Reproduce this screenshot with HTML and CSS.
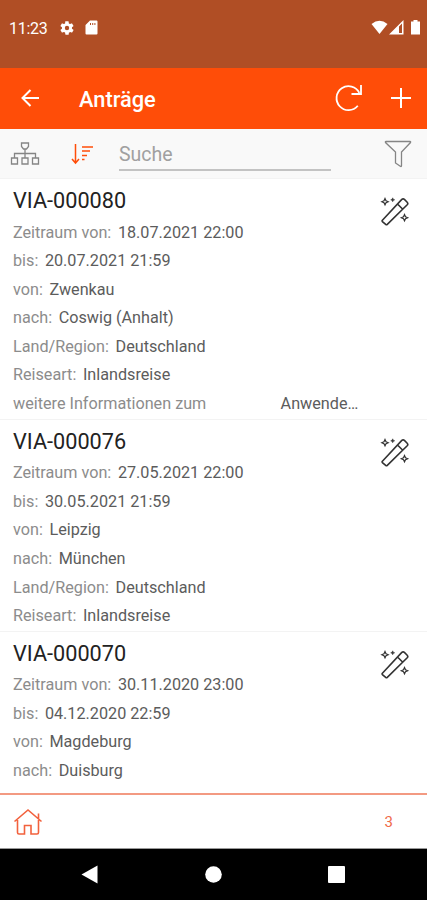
FILE: index.html
```html
<!DOCTYPE html>
<html lang="de">
<head>
  <meta charset="UTF-8" />
  <meta name="viewport" content="width=device-width, initial-scale=1.0"/>
  <title>Anträge</title>
  <link rel="stylesheet" href="styles.css">
</head>
<body>
  <svg class="sprite">
    <symbol id="wand" viewBox="0 0 30 30">
      <path d="M2.400 24.200 21.800 3.400q1.300-1.200 2.600 0l2.800 2.800q1.200 1.300 0 2.600L7.300 28.400q-.8.700-1.600 0L2.400 25.600q-.6-.7 0-1.400zM17.500 8l5.300 5.300" />
      <path d="m5 2.500 1 2.200 2.200 1-2.200 1-1 2.200-1-2.200-2.200-1 2.200-1zM24.500 18.500l1 2.200 2.200 1-2.200 1-1 2.200-1-2.200-2.200-1 2.200-1z" stroke-width="1.200" />
      <path d="m12.700 1.800.6 1.400 1.400.6-1.400.6-.6 1.400-.6-1.400-1.400-.6 1.400-.6z" fill="currentColor" stroke-width=".5" />
    </symbol>
  </svg>

  <div class="status-bar">
    <span class="clock">11:23</span>
    <svg class="gear" width="16" height="16" viewBox="0 0 24 24"><path fill-rule="evenodd" d="M19.400 13c0-.3.1-.6.1-1s0-.7-.1-1l2.100-1.600c.2-.2.3-.4.1-.7l-2-3.400c-.1-.2-.4-.3-.6-.2l-2.500 1c-.5-.4-1.100-.7-1.700-1l-.4-2.600c0-.3-.2-.5-.5-.5h-4c-.3 0-.5.2-.5.4L9.100 5.100c-.6.2-1.200.6-1.700 1L4.900 5.100c-.2-.1-.5 0-.6.2l-2 3.400c-.1.2-.1.5.1.7L4.500 11c0 .3-.1.7-.1 1s0 .7.1 1l-2.100 1.600c-.2.2-.2.4-.1.7l2 3.400c.1.2.4.3.6.2l2.500-1c.5.4 1.100.7 1.700 1l.4 2.600c0 .3.2.5.5.5h4c.3 0 .5-.2.5-.4l.4-2.700c.6-.2 1.200-.6 1.700-1l2.500 1c.2.1.5 0 .6-.2l2-3.400c.1-.2.1-.5-.1-.7zM12 15.300a3.300 3.300 0 1 1 0-6.600 3.300 3.300 0 0 1 0 6.600z"/></svg>
    <svg width="13" height="15" viewBox="0 0 13 15"><path fill-rule="evenodd" d="M5 .5h6.500q1 0 1 1v12q0 1-1 1h-10q-1 0-1-1V5zM5 3v2h1V3zm2.200 0v2h1V3zm2.200 0v2h1V3z"/></svg>
    <div class="signals">
      <svg width="17" height="15" viewBox="0 0 17 15"><path d="M.5 4Q8.500-2.500 16.500 4L8.500 14z"/></svg>
      <svg width="15" height="15" viewBox="0 0 15 15"><path fill-rule="evenodd" d="M14.500 0v14.500H0zM10 6.500v6.500h3V3.500z"/></svg>
      <svg class="battery" width="9" height="15" viewBox="0 0 9 15"><path d="M2.500 0h4v1.500H9V14.500H0V1.500h2.500z"/></svg>
    </div>
  </div>

  <header class="app-bar">
    <svg class="back" width="20" height="20" viewBox="0 0 20 20"><path d="M19 10H2.500M10.500 2l-8 8 8 8"/></svg>
    <h1>Anträge</h1>
    <svg class="refresh" width="28" height="28" viewBox="0 0 28 28"><path d="M22.800 21.800A12 12 0 1 1 24.300 8.800M26 1v9h-9.500"/></svg>
    <svg class="plus" width="22" height="22" viewBox="0 0 22 22"><path d="M11 1v20M1 11h20"/></svg>
  </header>

  <div class="toolbar">
    <svg class="tree" width="30" height="24" viewBox="0 0 30 24"><path d="M11.500 1h7v3.500l-2 2.500h-3l-2-2.500zM15 7v9M4.500 16v-4.500h21V16M1.500 16h6v6h-6zM12 16h6v6h-6zM22.500 16h6v6h-6z"/></svg>
    <svg class="sort" width="24" height="22" viewBox="0 0 24 22"><path d="M4.500 1v19M1 16l3.500 4L8 16M11 4h11M11 8h8M11 12.500h5M11 16.500h2.500"/></svg>
    <input class="search" type="text" placeholder="Suche">
    <svg class="filter" width="28" height="28" viewBox="0 0 28 28"><path d="M2 1.500h24q1 0 .5 1L17.500 12v13.500q0 1.500-1.200.7L11.500 23V12L1.500 2.500q-.5-1 .5-1z"/></svg>
  </div>

  <main class="list">
    <article class="entry">
      <h2>VIA-000080</h2>
      <svg class="wand"><use href="#wand"/></svg>
      <p><label>Zeitraum von:</label> <span>18.07.2021 22:00</span></p>
      <p><label>bis:</label> <span>20.07.2021 21:59</span></p>
      <p><label>von:</label> <span>Zwenkau</span></p>
      <p><label>nach:</label> <span>Coswig (Anhalt)</span></p>
      <p><label>Land/Region:</label> <span>Deutschland</span></p>
      <p><label>Reiseart:</label> <span>Inlandsreise</span></p>
      <p class="wide"><label>weitere Informationen zum</label> <span>Anwende…</span></p>
    </article>
    <article class="entry">
      <h2>VIA-000076</h2>
      <svg class="wand"><use href="#wand"/></svg>
      <p><label>Zeitraum von:</label> <span>27.05.2021 22:00</span></p>
      <p><label>bis:</label> <span>30.05.2021 21:59</span></p>
      <p><label>von:</label> <span>Leipzig</span></p>
      <p><label>nach:</label> <span>München</span></p>
      <p><label>Land/Region:</label> <span>Deutschland</span></p>
      <p><label>Reiseart:</label> <span>Inlandsreise</span></p>
    </article>
    <article class="entry">
      <h2>VIA-000070</h2>
      <svg class="wand"><use href="#wand"/></svg>
      <p><label>Zeitraum von:</label> <span>30.11.2020 23:00</span></p>
      <p><label>bis:</label> <span>04.12.2020 22:59</span></p>
      <p><label>von:</label> <span>Magdeburg</span></p>
      <p><label>nach:</label> <span>Duisburg</span></p>
    </article>
  </main>

  <footer class="bottom-bar">
    <svg width="30" height="28" viewBox="0 0 30 28"><path d="M1.500 13.500 15 2l13.500 11.500M4.500 12v12.500q0 1.500 1.500 1.500h5.500v-8.500h6.500V26h6q1.500 0 1.500-1.500V12M25.500 10.500V5.500"/></svg>
    <span class="count">3</span>
  </footer>

  <nav class="nav-bar">
    <svg width="17" height="19" viewBox="0 0 17 19"><path d="M.5 9.500 16.500.5v18z"/></svg>
    <svg width="17" height="17" viewBox="0 0 17 17"><circle cx="8.500" cy="8.500" r="8.300"/></svg>
    <svg width="17" height="17" viewBox="0 0 17 17"><rect width="17" height="17" rx="1"/></svg>
  </nav>
</body>
</html>
```
FILE: styles.css
```css
:root {
  --accent: #ff4d08;
  --status: #b04e25;
  --text: #5c5c5c;
  --label: #8c8c8c;
}

* {
  box-sizing: border-box;
}

body {
  margin: 0;
  height: 900px;
  display: flex;
  flex-direction: column;
  overflow: hidden;
  background: #fff;
  font-family: Roboto, sans-serif;
}

h1, h2, p {
  margin: 0;
}

svg {
  display: block;
  flex: none;
}

.sprite {
  width: 0;
  height: 0;
  position: absolute;
}

.status-bar {
  height: 68px;
  padding: 0 7px 13px 9px;
  display: flex;
  align-items: center;
  background: var(--status);
  color: #fff;
  fill: #fff;
}

.clock {
  width: 50px;
  padding-top: 1px;
  font-size: 16px;
  letter-spacing: -0.3px;
}

.gear {
  margin-right: 10px;
}

.signals {
  margin-left: auto;
  display: flex;
  gap: 1px;
}

.battery {
  margin-left: 6px;
}

.app-bar {
  height: 61px;
  padding: 0 15px 1px 20px;
  display: flex;
  align-items: center;
  background: var(--accent);
  color: #fff;
  fill: none;
  stroke: #fff;
  stroke-width: 2;
}

.app-bar h1 {
  margin-left: 39px;
  padding-top: 3px;
  font-size: 21.8px;
  font-weight: 500;
  stroke: none;
}

.refresh {
  margin-left: auto;
  margin-right: 27px;
  stroke-width: 1.8;
}

.toolbar {
  height: 50px;
  padding: 0 15px 0 10px;
  display: flex;
  align-items: center;
  background: #f9f9f9;
  border-bottom: 1px solid #f3f3f3;
  fill: none;
  stroke: #858585;
  stroke-width: 1.3;
}

.sort {
  margin-left: 31px;
  stroke: var(--accent);
  stroke-width: 1.5;
}

.search {
  width: 212px;
  height: 34px;
  margin-left: 24px;
  padding: 3px 0 0;
  border: none;
  border-bottom: 2px solid #c3c3c3;
  background: transparent;
  font-family: inherit;
  font-size: 19.5px;
  outline: none;
}

.search::placeholder {
  color: #a0a0a0;
}

.filter {
  margin-left: auto;
}

.list {
  flex: 1;
  overflow: hidden;
}

.entry {
  display: grid;
  grid-template-columns: 1fr 30px;
  grid-template-rows: 39.5px;
  grid-auto-rows: 28.6px;
  padding: 0 17px 0 13px;
  border-bottom: 1px solid #f3f3f3;
}

.entry:last-child {
  border-bottom: none;
}

.entry h2 {
  font-size: 21.7px;
  font-weight: 400;
  line-height: 43px;
  color: #222;
}

.entry p {
  grid-column: 1 / -1;
  display: flex;
  gap: 6.6px;
  font-size: 16.2px;
  line-height: 27.6px;
  color: var(--text);
}

.entry label {
  color: var(--label);
}

.entry .wide label {
  width: 261px;
}

.wand {
  width: 30px;
  height: 30px;
  margin-top: 17px;
  color: #333;
  fill: none;
  stroke: currentColor;
  stroke-width: 1.6;
}

.bottom-bar {
  height: 56px;
  padding: 0 34px 0 13px;
  display: flex;
  align-items: center;
  justify-content: space-between;
  border-top: 2px solid #f39a82;
  border-bottom: 1px solid #999;
  color: #f06a4a;
  fill: none;
  stroke: #f2613d;
  stroke-width: 1.6;
}

.count {
  font-size: 15px;
  stroke: none;
}

.nav-bar {
  height: 51px;
  padding: 0 82px 0 81px;
  display: flex;
  align-items: center;
  justify-content: space-between;
  background: #000;
  fill: #fff;
}
```
